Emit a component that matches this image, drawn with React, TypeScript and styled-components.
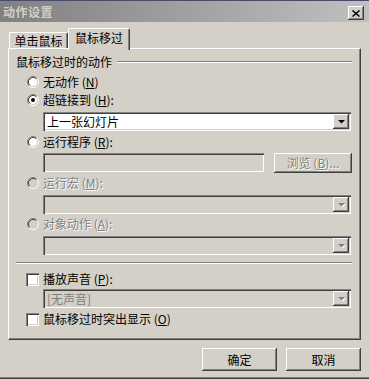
import React from 'react';
import styled, { createGlobalStyle } from 'styled-components';

const GlobalStyle = createGlobalStyle`
  html, body {
    margin: 0;
    padding: 0;
    background: #d4d0c8;
  }
  body {
    font-family: "Noto Sans CJK SC", "Liberation Sans", sans-serif;
    font-size: 12px;
    color: #000;
  }
`;

const raised = `
  background: #d4d0c8;
  box-shadow: inset -1px -1px #404040, inset 1px 1px #ffffff, inset -2px -2px #808080;
`;

const sunken = `
  box-shadow: inset 1px 1px #808080, inset 2px 2px #404040, inset -1px -1px #ffffff,
    inset -2px -2px #d4d0c8;
`;

const Dialog = styled.div`
  width: 369px;
  height: 379px;
  box-sizing: border-box;
  background: #d4d0c8;
  border-top: 1px solid #4a4a6e;
  box-shadow: inset 0 -1px #404040, inset 0 -2px #808080;
  display: flex;
  flex-direction: column;
  overflow: hidden;
`;

const TitleBar = styled.div`
  height: 21px;
  flex-shrink: 0;
  display: flex;
  align-items: center;
  justify-content: space-between;
  padding: 0 5px 0 3px;
  background: linear-gradient(to right, #808080, #c0c0c0);
  color: #d4d0c8;
  font-weight: bold;
  font-size: 12px;
  letter-spacing: 0.5px;
  line-height: 1;
`;

const CloseButton = styled.div`
  ${raised}
  width: 16px;
  height: 14px;
  margin-top: 3px;
  display: flex;
  align-items: center;
  justify-content: center;
`;

const Body = styled.div`
  flex: 1;
  display: flex;
  flex-direction: column;
  padding: 6px 8px 0 8px;
`;

const TabStrip = styled.div`
  display: flex;
  height: 20px;
  padding-left: 1px;
`;

const Tab = styled.div<{ $active?: boolean }>`
  box-sizing: border-box;
  width: ${(p) => (p.$active ? 62 : 59)}px;
  height: ${(p) => (p.$active ? 22 : 16)}px;
  margin-top: ${(p) => (p.$active ? 0 : 4)}px;
  padding-top: ${(p) => (p.$active ? 2 : 1)}px;
  background: #d4d0c8;
  border-top: 1px solid #ffffff;
  border-left: ${(p) => (p.$active ? '1px solid #ffffff' : '1px solid #ffffff')};
  border-right: 1px solid #404040;
  box-shadow: inset -1px 0 #808080;
  border-radius: 2px 2px 0 0;
  text-align: center;
  line-height: 14px;
  position: relative;
  z-index: ${(p) => (p.$active ? 2 : 1)};
`;

const Panel = styled.div`
  box-sizing: border-box;
  height: 292px;
  border-top: 1px solid #ffffff;
  border-left: 1px solid #ffffff;
  border-right: 1px solid #404040;
  border-bottom: 1px solid #404040;
  box-shadow: inset -1px -1px #808080;
  padding: 0 8px 0 7px;
  display: flex;
  flex-direction: column;
`;

const GroupHeader = styled.div`
  margin-top: 6px;
  height: 14px;
  display: flex;
  align-items: center;
  gap: 5px;
  line-height: 14px;
`;

const Etched = styled.div`
  flex: 1;
  height: 0;
  border-top: 1px solid #808080;
  border-bottom: 1px solid #ffffff;
`;

const Separator = styled(Etched)<{ $top: number }>`
  flex: none;
  margin-top: ${(p) => p.$top}px;
`;

const OptionRow = styled.div<{ $top: number; $indent?: number; $disabled?: boolean }>`
  margin-top: ${(p) => p.$top}px;
  margin-left: ${(p) => p.$indent ?? 11}px;
  height: 14px;
  display: flex;
  align-items: center;
  gap: 4px;
  line-height: 14px;
  color: ${(p) => (p.$disabled ? '#808080' : '#000')};
  text-shadow: ${(p) => (p.$disabled ? '1px 1px 0 #ffffff' : 'none')};
`;

const CheckBox = styled.div`
  box-sizing: border-box;
  width: 13px;
  height: 13px;
  background: #ffffff;
  ${sunken}
`;

const Field = styled.div<{ $top?: number; $width: number; $disabled?: boolean }>`
  box-sizing: border-box;
  margin-top: ${(p) => p.$top ?? 0}px;
  margin-left: ${(p) => (p.$top === undefined ? 0 : 27)}px;
  width: ${(p) => p.$width}px;
  height: 19px;
  flex-shrink: 0;
  background: ${(p) => (p.$disabled ? '#d4d0c8' : '#ffffff')};
  ${sunken}
  display: flex;
  align-items: center;
  padding: 2px 2px 2px 4px;
  line-height: 15px;
  color: ${(p) => (p.$disabled ? '#808080' : '#000')};
`;

const FieldText = styled.div`
  flex: 1;
`;

const DropButton = styled.div`
  ${raised}
  width: 16px;
  height: 15px;
  display: flex;
  align-items: center;
  justify-content: center;
`;

const InputRow = styled.div`
  margin-top: 4px;
  margin-left: 27px;
  height: 20px;
  display: flex;
  align-items: flex-start;
  gap: 10px;
`;

const PushButton = styled.div<{ $width: number; $height: number; $disabled?: boolean }>`
  ${raised}
  box-sizing: border-box;
  width: ${(p) => p.$width}px;
  height: ${(p) => p.$height}px;
  display: flex;
  align-items: center;
  justify-content: center;
  line-height: 14px;
  color: ${(p) => (p.$disabled ? '#808080' : '#000')};
  text-shadow: ${(p) => (p.$disabled ? '1px 1px 0 #ffffff' : 'none')};
`;

const Footer = styled.div`
  margin-top: 8px;
  display: flex;
  justify-content: flex-end;
  gap: 9px;
`;

const Key = styled.span`
  text-decoration: underline;
`;

const Radio = ({ checked, disabled }: { checked?: boolean; disabled?: boolean }) => (
  <svg width="12" height="12" viewBox="0 0 12 12">
    <circle cx="6" cy="6" r="4.2" fill={disabled ? '#d4d0c8' : '#ffffff'} />
    <path d="M2.11 9.89 A5.5 5.5 0 0 1 9.89 2.11" fill="none" stroke="#808080" />
    <path d="M9.89 2.11 A5.5 5.5 0 0 1 2.11 9.89" fill="none" stroke="#ffffff" />
    <path d="M2.82 9.18 A4.5 4.5 0 0 1 9.18 2.82" fill="none" stroke="#404040" />
    <path d="M9.18 2.82 A4.5 4.5 0 0 1 2.82 9.18" fill="none" stroke="#d4d0c8" />
    {checked && <circle cx="6" cy="6" r="2" fill="#000" />}
  </svg>
);

const Arrow = ({ disabled }: { disabled?: boolean }) => (
  <svg width="7" height="4" viewBox="0 0 7 4">
    {disabled && <path d="M1 1 H8 L4.5 4.5 Z" fill="#ffffff" />}
    <path d="M0 0 H7 L3.5 3.5 Z" fill={disabled ? '#808080' : '#000'} />
  </svg>
);

const Combo = ({ top, text, disabled }: { top: number; text?: string; disabled?: boolean }) => (
  <Field $top={top} $width={308} $disabled={disabled}>
    <FieldText>{text}</FieldText>
    <DropButton>
      <Arrow disabled={disabled} />
    </DropButton>
  </Field>
);

export default function App() {
  return (
    <>
      <GlobalStyle />
      <Dialog>
        <TitleBar>
          <span>动作设置</span>
          <CloseButton>
            <svg width="8" height="7" viewBox="0 0 8 7">
              <path d="M0.5 0.5 L7.5 6.5 M7.5 0.5 L0.5 6.5" stroke="#000" strokeWidth="1.5" />
            </svg>
          </CloseButton>
        </TitleBar>
        <Body>
          <TabStrip>
            <Tab>单击鼠标</Tab>
            <Tab $active>鼠标移过</Tab>
          </TabStrip>
          <Panel>
            <GroupHeader>
              <span>鼠标移过时的动作</span>
              <Etched />
            </GroupHeader>
            <OptionRow $top={6}>
              <Radio />
              <span>
                无动作 (<Key>N</Key>)
              </span>
            </OptionRow>
            <OptionRow $top={4}>
              <Radio checked />
              <span>
                超链接到 (<Key>H</Key>):
              </span>
            </OptionRow>
            <Combo top={5} text="上一张幻灯片" />
            <OptionRow $top={4}>
              <Radio />
              <span>
                运行程序 (<Key>R</Key>):
              </span>
            </OptionRow>
            <InputRow>
              <Field $width={221} $disabled />
              <PushButton $width={78} $height={20} $disabled>
                浏览 (<Key>B</Key>)...
              </PushButton>
            </InputRow>
            <OptionRow $top={3} $disabled>
              <Radio disabled />
              <span>
                运行宏 (<Key>M</Key>):
              </span>
            </OptionRow>
            <Combo top={5} disabled />
            <OptionRow $top={3} $disabled>
              <Radio disabled />
              <span>
                对象动作 (<Key>A</Key>):
              </span>
            </OptionRow>
            <Combo top={5} disabled />
            <Separator $top={7} />
            <OptionRow $top={8} $indent={10}>
              <CheckBox />
              <span>
                播放声音 (<Key>P</Key>):
              </span>
            </OptionRow>
            <Combo top={3} text="[无声音]" disabled />
            <OptionRow $top={4} $indent={10}>
              <CheckBox />
              <span>
                鼠标移过时突出显示 (<Key>O</Key>)
              </span>
            </OptionRow>
          </Panel>
          <Footer>
            <PushButton $width={75} $height={23}>
              确定
            </PushButton>
            <PushButton $width={75} $height={23}>
              取消
            </PushButton>
          </Footer>
        </Body>
      </Dialog>
    </>
  );
}
